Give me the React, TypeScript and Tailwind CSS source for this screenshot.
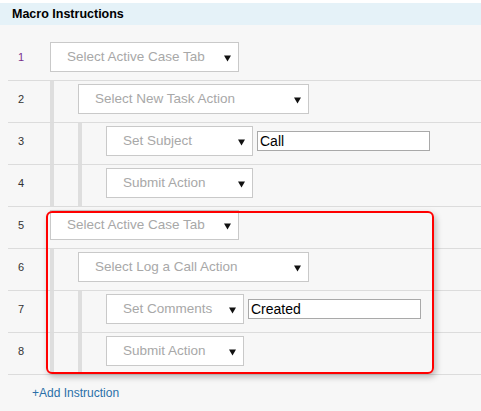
type Step = {
  n: number;
  level: number;
  label: string;
  width: number;
  value?: string;
};

const steps: Step[] = [
  { n: 1, level: 0, label: "Select Active Case Tab", width: 189 },
  { n: 2, level: 1, label: "Select New Task Action", width: 231 },
  { n: 3, level: 2, label: "Set Subject", width: 147, value: "Call" },
  { n: 4, level: 2, label: "Submit Action", width: 147 },
  { n: 5, level: 0, label: "Select Active Case Tab", width: 189 },
  { n: 6, level: 1, label: "Select Log a Call Action", width: 231 },
  { n: 7, level: 2, label: "Set Comments", width: 138, value: "Created" },
  { n: 8, level: 2, label: "Submit Action", width: 138 },
];

function Arrow() {
  return (
    <svg width="7" height="7" viewBox="0 0 7 7" className="absolute right-[7px] top-[12px]">
      <path d="M0 0.5 H7 L3.5 6.5 Z" fill="#111" />
    </svg>
  );
}

function StepRow({ step }: { step: Step }) {
  return (
    <div className="flex h-[42px] border-b border-[#dcdcdc]">
      {/* Step number */}
      <div
        className={`w-[42px] shrink-0 pl-[10px] pt-[3px] h-[33px] flex items-center text-[11px] ${
          step.n === 1 ? "text-[#7a2f8c]" : "text-[#333]"
        }`}
      >
        {step.n}
      </div>

      {/* Indent guides */}
      {Array.from({ length: step.level }).map((_, i) => (
        <div key={i} className="w-[28px] shrink-0 border-l-[4px] border-[#dedede]" />
      ))}

      <div className="flex items-center gap-[4px] self-start mt-[3px]">
        <div
          className="relative h-[30px] bg-white border border-[#c9c9c9] pl-[16px] flex items-center text-[13.5px] text-[#a8a8a8]"
          style={{ width: step.width }}
        >
          {step.label}
          <Arrow />
        </div>
        {step.value !== undefined && (
          <div className="w-[173px] h-[20px] bg-white border border-[#a9a9a9] pl-[2px] flex items-center text-[14px] text-black">
            {step.value}
          </div>
        )}
      </div>
    </div>
  );
}

export default function App() {
  return (
    <div
      className="relative w-[481px] h-[411px] bg-[#f7f7f7] overflow-hidden"
      style={{ fontFamily: '"Liberation Sans", Arial, sans-serif' }}
    >
      <div className="h-[3px] bg-white" />
      <div className="h-[22px] bg-[#e5f2f8] pl-[12px] flex items-center text-[12.5px] font-bold text-black">
        Macro Instructions
      </div>

      <div className="pl-[8px] pt-[14px]">
        {steps.map((s) => (
          <StepRow key={s.n} step={s} />
        ))}
      </div>

      <div className="pl-[32px] pt-[9px] text-[12px] text-[#2a6fa8]">+Add Instruction</div>

      {/* Highlight around steps 5-8 */}
      <div className="absolute left-[46px] top-[211px] w-[388px] h-[163px] border-2 border-[#f00] rounded-[6px] shadow-[2px_3px_6px_rgba(0,0,0,0.25)] pointer-events-none" />
    </div>
  );
}
